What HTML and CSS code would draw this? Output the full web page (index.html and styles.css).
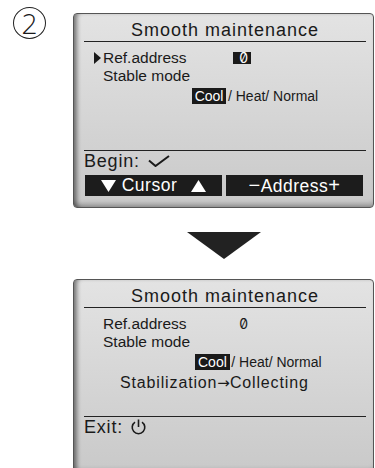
FILE: index.html
```html
<!DOCTYPE html>
<html lang="en">
<head>
  <meta charset="UTF-8">
  <title>Smooth maintenance</title>
  <link rel="stylesheet" href="styles.css">
</head>
<body>
<div class="page">
  <div class="side">
    <div class="step">2</div>
  </div>

  <main class="flow">
    <section class="screen">
      <h1 class="title">Smooth maintenance</h1>
      <div class="body">
        <div class="row"><span class="cursor"></span><span class="label">Ref.address</span><span class="value is-selected">0</span></div>
        <div class="row"><span class="cursor is-hidden"></span>Stable mode</div>
        <div class="row row-mode"><span class="sel">Cool</span>/ Heat/ Normal</div>
      </div>
      <div class="foot">
        Begin:
        <svg class="check" width="22" height="12" viewBox="0 0 22 12">
          <path d="M1 5.5 L7.5 11 L21 1" fill="none" stroke="#1a1a1a" stroke-width="2"/>
        </svg>
      </div>
      <div class="keys">
        <div class="key">
          <svg class="tri" width="15" height="12" viewBox="0 0 15 12"><path d="M0 0 H15 L7.5 12 Z" fill="#fff"/></svg>
          <span class="key-text">Cursor</span>
          <svg class="tri tri-up" width="15" height="12" viewBox="0 0 15 12"><path d="M0 12 H15 L7.5 0 Z" fill="#fff"/></svg>
        </div>
        <div class="key"><span class="sign">−</span>Address<span class="sign">+</span></div>
      </div>
    </section>

    <div class="next"></div>

    <section class="screen">
      <h1 class="title">Smooth maintenance</h1>
      <div class="body">
        <div class="row"><span class="cursor is-hidden"></span><span class="label">Ref.address</span><span class="value">0</span></div>
        <div class="row"><span class="cursor is-hidden"></span>Stable mode</div>
        <div class="row row-mode is-shifted"><span class="sel">Cool</span>/ Heat/ Normal</div>
        <div class="row row-status">Stabilization<span class="arrow">→</span>Collecting</div>
      </div>
      <div class="foot">
        Exit:
        <svg class="power" width="17" height="16" viewBox="0 0 17 16">
          <path d="M5 3.2 A6.3 6.3 0 1 0 12 3.2" fill="none" stroke="#1a1a1a" stroke-width="1.6"/>
          <path d="M8.5 0.5 V8" fill="none" stroke="#1a1a1a" stroke-width="1.6"/>
        </svg>
      </div>
    </section>
  </main>
</div>
</body>
</html>
```

FILE: styles.css
```css
body {
  margin: 0;
  font-family: "Liberation Sans", Arial, sans-serif;
  color: #1a1a1a;
  background: #fff;
}

.page {
  display: flex;
  width: 375px;
  height: 468px;
  overflow: hidden;
}

.side {
  flex: none;
  width: 73px;
}

.step {
  width: 31px;
  height: 30px;
  margin: 7px 0 0 13px;
  border: 1.5px solid #222;
  border-radius: 50%;
  font-family: "Open Sans", "Liberation Sans", sans-serif;
  font-weight: 300;
  font-size: 28px;
  line-height: 30px;
  text-align: center;
}

.flow {
  flex: none;
  width: 302px;
}

.screen {
  box-sizing: border-box;
  width: 301px;
  height: 195px;
  margin-top: 13px;
  padding: 0 7px 10px 10px;
  border: 1px solid #555;
  border-radius: 4px;
  background: linear-gradient(#e3e3e3, #c9c9c9);
  box-shadow: inset 5px 0 4px -2px rgba(0, 0, 0, .45),
    inset 0 -6px 5px -3px rgba(0, 0, 0, .25);
}

.title {
  margin: 0;
  padding-top: 6px;
  border-bottom: 1.5px solid #222;
  font-size: 18px;
  font-weight: 400;
  line-height: 21px;
  letter-spacing: 1px;
  text-align: center;
}

.body {
  height: 108px;
  padding-top: 7px;
  box-sizing: border-box;
}

.row {
  padding-left: 10px;
  font-size: 15.5px;
  line-height: 18px;
  white-space: nowrap;
}

.cursor {
  display: inline-block;
  width: 0;
  height: 0;
  margin-right: 2px;
  border-left: 7px solid #1a1a1a;
  border-top: 6px solid transparent;
  border-bottom: 6px solid transparent;
  vertical-align: -1px;
}

.cursor.is-hidden {
  visibility: hidden;
}

.label {
  display: inline-block;
  width: 130px;
}

.value {
  display: inline-block;
  box-sizing: border-box;
  width: 18px;
  height: 12px;
  padding-right: 3px;
  font-family: Inter, "DejaVu Sans Mono", monospace;
  font-feature-settings: "zero" 1;
  font-size: 14px;
  line-height: 12px;
  text-align: right;
}

.value.is-selected {
  background: #1a1a1a;
  color: #fff;
}

.row-mode {
  margin-top: 1.5px;
  padding-left: 107.7px;
  font-size: 14px;
}

.row-mode.is-shifted {
  padding-left: 111px;
}

.sel {
  margin-right: 1.5px;
  padding: 0 3px;
  background: #1a1a1a;
  color: #fff;
}

.row-status {
  margin-top: 3px;
  padding-left: 36px;
  font-size: 16px;
  letter-spacing: .85px;
}

.arrow {
  font-family: "DejaVu Sans", sans-serif;
  font-size: 15px;
  letter-spacing: 0;
}

.foot {
  border-top: 1.5px solid #222;
  font-size: 18px;
  line-height: 20px;
  letter-spacing: .8px;
  white-space: nowrap;
}

.check {
  margin-left: 2px;
  vertical-align: 0;
}

.power {
  margin-left: 1px;
  vertical-align: -2px;
}

.keys {
  display: grid;
  grid-template-columns: 1fr 1fr;
  gap: 4px;
  margin: 4px 3px 0 1px;
}

.key {
  height: 21px;
  background: #1c1c1c;
  color: #fff;
  font-size: 17.5px;
  line-height: 21px;
  letter-spacing: .5px;
  text-align: center;
  white-space: nowrap;
}

.tri {
  vertical-align: -1px;
}

.tri-up {
  margin-left: 8px;
}

.sign {
  font-size: 20px;
}

.next {
  width: 74px;
  height: 27px;
  margin: 24px auto 0;
  background: #222;
  clip-path: polygon(0 0, 100% 0, 50% 100%);
}

.next + .screen {
  margin-top: 20px;
}
```
